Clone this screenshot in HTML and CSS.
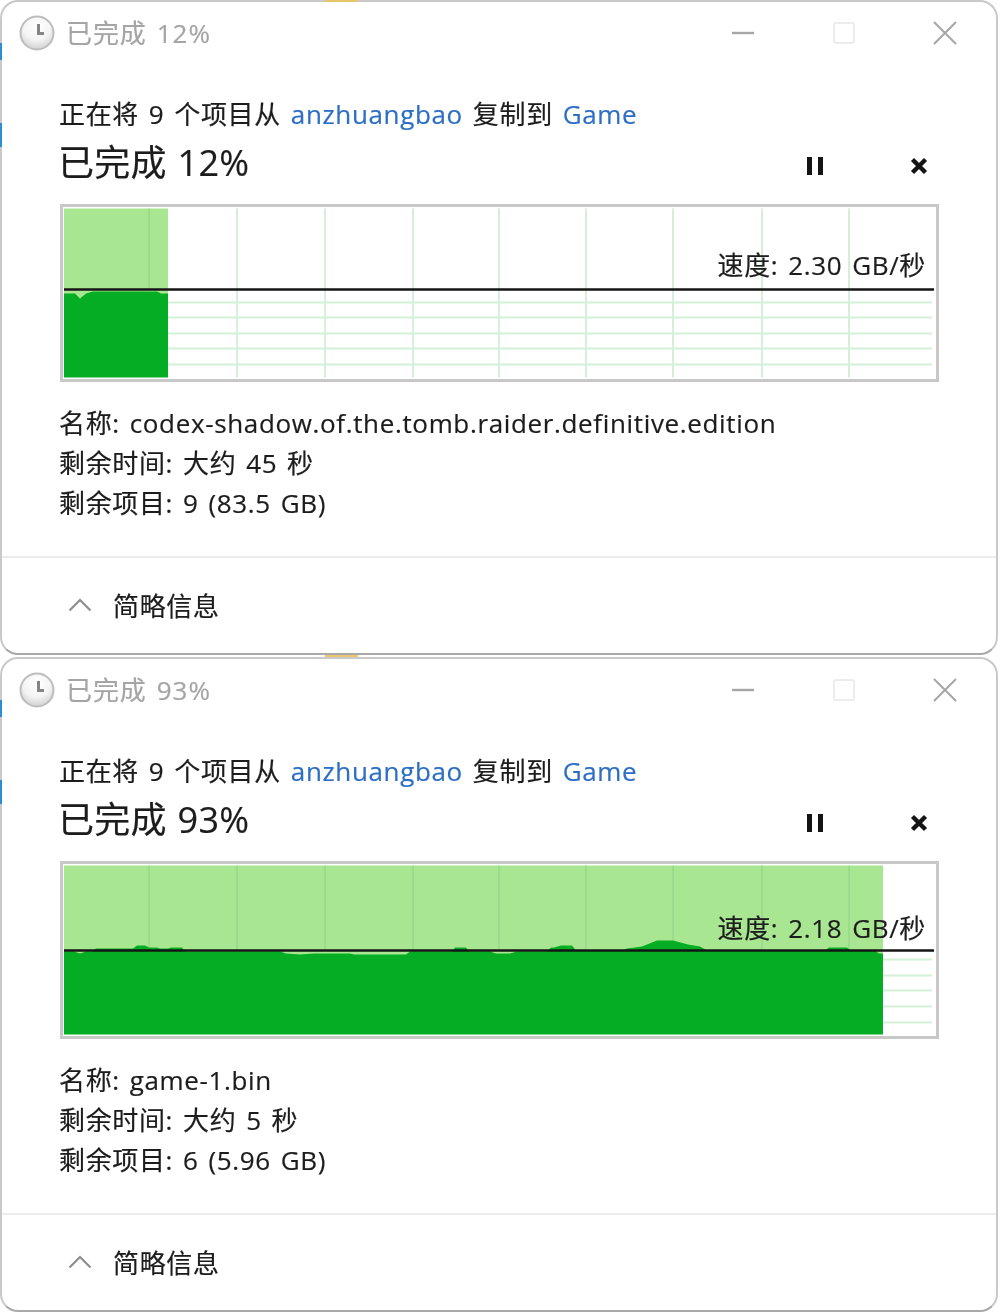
FILE: index.html
```html
<!DOCTYPE html>
<html lang="zh-CN">
<head>
<meta charset="utf-8">
<title>复制文件</title>
<link rel="stylesheet" href="styles.css">
</head>
<body>
<svg class="defs" width="0" height="0" aria-hidden="true">
  <defs>
    <radialGradient id="clockfill" cx="50%" cy="30%" r="75%">
      <stop offset="0" stop-color="#ffffff"/>
      <stop offset="0.55" stop-color="#f4f4f4"/>
      <stop offset="1" stop-color="#cccccc"/>
    </radialGradient>
    <symbol id="clock" viewBox="0 0 36 36">
      <circle cx="18" cy="18" r="16.500" fill="url(#clockfill)" stroke="#bdbdbd" stroke-width="2"/>
      <path d="M19.500 9v9.500h5.500" fill="none" stroke="#858585" stroke-width="3"/>
    </symbol>
    <symbol id="min" viewBox="0 0 24 24"><path d="M1 12h22" stroke="#a6a6a6" stroke-width="2.400" fill="none"/></symbol>
    <symbol id="max" viewBox="0 0 24 24"><rect x="2" y="2" width="20" height="20" rx="2" stroke="#ececec" stroke-width="2" fill="none"/></symbol>
    <symbol id="close" viewBox="0 0 24 24"><path d="M1 1l22 22M23 1L1 23" stroke="#a6a6a6" stroke-width="2" fill="none"/></symbol>
    <symbol id="pause" viewBox="0 0 18 18"><path d="M1 0h5v18H1zM12 0h5v18h-5z" fill="#141414"/></symbol>
    <symbol id="stop" viewBox="0 0 18 18"><path d="M2.500 2.500l13 13M15.500 2.500l-13 13" stroke="#141414" stroke-width="4.400" fill="none"/></symbol>
    <symbol id="chev" viewBox="0 0 24 14"><path d="M1.500 12.500L12 2l10.500 10.500" stroke="#8f8f8f" stroke-width="2.200" fill="none"/></symbol>
  </defs>
</svg>

<span class="peek peek-top"></span>
<span class="peek peek-gap"></span>
<span class="edge edge-a"></span>
<span class="edge edge-b"></span>
<span class="edge edge-c"></span>
<span class="edge edge-d"></span>

<main class="stack">
  <section class="window">
    <header class="titlebar">
      <svg class="clock"><use href="#clock"/></svg>
      <span class="title">已完成 12%</span>
      <span class="caption">
        <svg class="cap-min"><use href="#min"/></svg>
        <svg class="cap-max"><use href="#max"/></svg>
        <svg class="cap-close"><use href="#close"/></svg>
      </span>
    </header>
    <div class="content">
      <p class="line">正在将 9 个项目从 <a class="link">anzhuangbao</a> 复制到 <a class="link">Game</a></p>
      <div class="progress-row">
        <h2 class="percent">已完成 12%</h2>
        <span class="actions">
          <svg class="act-pause"><use href="#pause"/></svg>
          <svg class="act-stop"><use href="#stop"/></svg>
        </span>
      </div>
      <div class="graph">
        <svg class="chart" viewBox="0 0 870 169">
          <g class="grid">
            <path d="M104 94h764M104 109h764M104 125h764M104 140h764M104 156h764"/>
            <path d="M173 0v169M261 0v169M349 0v169M435 0v169M522 0v169M609 0v169M698 0v169M785 0v169"/>
          </g>
          <rect class="light" width="104" height="90"/>
          <path class="light-grid" d="M85 0v81"/>
          <path class="dark" d="M0 169V85H11L16 90 22 85 29 83H93L97 85H104V169Z"/>
          <path class="speed-line" d="M0 81H870"/>
        </svg>
        <span class="speed speed-first">速度: 2.30 GB/秒</span>
      </div>
      <ul class="facts">
        <li>名称: codex-shadow.of.the.tomb.raider.definitive.edition</li>
        <li>剩余时间: 大约 45 秒</li>
        <li>剩余项目: 9 (83.5 GB)</li>
      </ul>
    </div>
    <footer class="footer">
      <svg class="chev"><use href="#chev"/></svg>
      <span class="less">简略信息</span>
    </footer>
  </section>

  <section class="window">
    <header class="titlebar">
      <svg class="clock"><use href="#clock"/></svg>
      <span class="title">已完成 93%</span>
      <span class="caption">
        <svg class="cap-min"><use href="#min"/></svg>
        <svg class="cap-max"><use href="#max"/></svg>
        <svg class="cap-close"><use href="#close"/></svg>
      </span>
    </header>
    <div class="content">
      <p class="line">正在将 9 个项目从 <a class="link">anzhuangbao</a> 复制到 <a class="link">Game</a></p>
      <div class="progress-row">
        <h2 class="percent">已完成 93%</h2>
        <span class="actions">
          <svg class="act-pause"><use href="#pause"/></svg>
          <svg class="act-stop"><use href="#stop"/></svg>
        </span>
      </div>
      <div class="graph">
        <svg class="chart" viewBox="0 0 870 169">
          <g class="grid">
            <path d="M819 94h49M819 110h49M819 125h49M819 141h49M819 157h49"/>
          </g>
          <rect class="light" width="819" height="95"/>
          <path class="light-grid" d="M85 0v85M173 0v85M261 0v85M349 0v85M435 0v85M522 0v85M609 0v85M698 0v85M785 0v85"/>
          <path class="dark" d="M0 169V86H10L16 88 22 86H29L32 83H69L73 80H81L85 82H93L96 83H104L107 82H118L121 86H216L222 88 236 89 250 88H286L290 89H342L346 86H388L391 82H402L405 86H426L432 88 446 88 453 86H483L487 82H490L497 80H508L512 85H559L563 83 578 81 593 75 609 75 624 79 636 81 643 85H761L765 82H783L787 85H811L815 88H819V169Z"/>
          <path class="speed-line" d="M0 85H870"/>
        </svg>
        <span class="speed speed-second">速度: 2.18 GB/秒</span>
      </div>
      <ul class="facts">
        <li>名称: game-1.bin</li>
        <li>剩余时间: 大约 5 秒</li>
        <li>剩余项目: 6 (5.96 GB)</li>
      </ul>
    </div>
    <footer class="footer">
      <svg class="chev"><use href="#chev"/></svg>
      <span class="less">简略信息</span>
    </footer>
  </section>
</main>
</body>
</html>
```
FILE: styles.css
```css
* { box-sizing: border-box; }
html, body { margin: 0; padding: 0; background: #fff; }
body {
  position: relative;
  font-family: "Open Sans", "Noto Sans CJK SC", sans-serif;
  color: #1c1c1c;
  width: 1000px;
  height: 1314px;
  overflow: hidden;
  letter-spacing: 0.65px;
  word-spacing: 2.500px;
  -webkit-text-stroke: 0.2px;
}
.defs { position: absolute; }
.stack { display: flex; flex-direction: column; gap: 2px; }

.peek { position: absolute; z-index: 2; left: 325px; width: 33px; height: 2px; background: #e8c66e; }
.peek-top { top: 0; }
.peek-gap { top: 655px; }
.edge { position: absolute; z-index: 2; left: 0; width: 2px; background: #2e8fd0; }
.edge-a { top: 43px; height: 17px; }
.edge-b { top: 123px; height: 24px; }
.edge-c { top: 700px; height: 17px; }
.edge-d { top: 780px; height: 24px; }

.window {
  width: 998px;
  height: 655px;
  display: flex;
  flex-direction: column;
  background: #fff;
  border: 2px solid #c9c9c9;
  border-bottom-color: #a9a9a9;
  border-radius: 18px;
  filter: blur(0.45px);
}

.titlebar {
  height: 62px;
  flex: none;
  display: flex;
  align-items: center;
  padding-left: 17px;
}
.clock { width: 36px; height: 36px; flex: none; }
.title {
  margin-left: 11px;
  font-size: 26px;
  letter-spacing: 0.9px;
  color: #a5a5a5;
  line-height: 62px;
}
.caption { margin-left: auto; display: flex; align-items: center; height: 100%; padding-right: 39px; }
.cap-min { width: 24px; height: 24px; }
.cap-max { width: 24px; height: 24px; margin-left: 77px; }
.cap-close { width: 24px; height: 24px; margin-left: 77px; }

.content { padding-left: 58px; padding-right: 58px; flex: 1; min-height: 0; }
.line { margin: 0 0 0 -1px; padding-top: 30px; font-size: 26px; line-height: 40px; white-space: nowrap; }
.link { color: #2d6fc4; }
.progress-row { display: flex; align-items: center; height: 56px; margin-top: 1px; }
.percent { margin: 0 0 0 -2px; font-weight: 400; font-size: 36px; letter-spacing: 0.3px; word-spacing: 1px; line-height: 56px; white-space: nowrap; }
.actions { margin-left: auto; display: flex; align-items: center; padding-right: 10px; padding-top: 6px; }
.act-pause { width: 18px; height: 18px; }
.act-stop { width: 18px; height: 18px; margin-left: 86px; }

.graph {
  position: relative;
  width: 879px;
  height: 178px;
  margin-top: 13px;
  border: 3px solid #c8c8c8;
  padding: 1px 1px 0 1px;
  background: #fff;
}
.chart { display: block; width: 870px; height: 170px; }
.grid path { stroke: #d4f0d8; stroke-width: 2; fill: none; }
.light { fill: #a9e691; }
.light-grid { stroke: #96d98a; stroke-width: 1.500; fill: none; }
.dark { fill: #05ad24; }
.speed-line { stroke: #141414; stroke-width: 2.400; fill: none; }
.speed { position: absolute; right: 10px; font-size: 26px; line-height: 36px; white-space: nowrap; }
.speed-first { top: 40px; }
.speed-second { top: 46px; }

.facts { list-style: none; margin: 21px 0 0 -1px; padding: 0; font-size: 26px; line-height: 40px; white-space: nowrap; }

.footer {
  height: 97px;
  flex: none;
  border-top: 2px solid #ececec;
  display: flex;
  align-items: center;
  padding-left: 66px;
  padding-bottom: 2px;
}
.chev { width: 24px; height: 14px; flex: none; }
.less { margin-left: 21px; font-size: 26px; }
```
